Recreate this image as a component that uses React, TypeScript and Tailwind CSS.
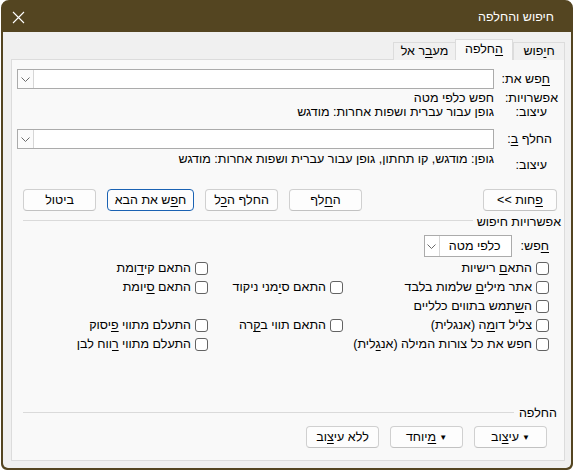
import React from 'react'

const U = ({ children }: { children: React.ReactNode }) => (
  <span className="underline underline-offset-2">{children}</span>
)

function Btn({ children, primary = false, w = 'w-[73px]' }: { children: React.ReactNode; primary?: boolean; w?: string }) {
  return (
    <div
      className={`${w} h-[22px] shrink-0 flex items-center justify-center rounded-[4px] bg-[#fdfdfd] border ${
        primary ? 'border-[#1a62b3]' : 'border-[#d0d0d0] border-b-[#c2c2c2]'
      }`}
    >
      <span className="whitespace-nowrap">{children}</span>
    </div>
  )
}

function Chevron() {
  return (
    <svg width="9" height="5" viewBox="0 0 9 5" fill="none">
      <path d="M0.5 0.5L4.5 4.5L8.5 0.5" stroke="#6a6a6a" strokeWidth="1" />
    </svg>
  )
}

function ComboInput() {
  return (
    <div className="flex-1 h-[20px] flex bg-white border border-[#ababab]">
      <div className="flex-1" />
      <div className="w-[16px] h-full flex items-center justify-center border-r border-[#d6d6d6] bg-[#fbfbfb]">
        <Chevron />
      </div>
    </div>
  )
}

function Check({ children }: { children?: React.ReactNode }) {
  if (!children) return <div />
  return (
    <div className="flex items-center gap-[4px] h-[19px]">
      <div className="w-[13px] h-[13px] shrink-0 rounded-[3px] border border-[#636363] bg-white" />
      <span className="whitespace-nowrap">{children}</span>
    </div>
  )
}

function Divider({ label, textPr, lineClass }: { label: string; textPr: string; lineClass: string }) {
  return (
    <div className={`flex items-center h-[14px] pl-[6px] ${textPr}`}>
      <span className="whitespace-nowrap leading-[14px]">{label}</span>
      <div className={`flex-1 h-px bg-[#dadada] ${lineClass}`} />
    </div>
  )
}

export default function App() {
  return (
    <div
      dir="rtl"
      className="w-[573px] h-[471px] bg-white text-[12.5px] text-black"
      style={{ fontFamily: '"Liberation Sans", "DejaVu Sans", sans-serif' }}
    >
      <div className="w-[572px] h-[470px] flex flex-col rounded-t-[8px] rounded-b-[6px] border-2 border-[#544521] bg-[#544521] overflow-hidden">
        {/* Title bar */}
        <div className="h-[30px] shrink-0 flex items-center justify-between pr-[17px] pl-[9px]">
          <span className="text-white text-[12.5px]">חיפוש והחלפה</span>
          <svg width="13" height="13" viewBox="0 0 13 13" fill="none">
            <path d="M1 1L12 12M12 1L1 12" stroke="#ffffff" strokeWidth="1.1" />
          </svg>
        </div>

        {/* Body */}
        <div className="flex-1 flex flex-col bg-[#f0f0f0] rounded-b-[5px]">
          {/* Tabs */}
          <div className="flex items-end h-[21px] mt-[7px] mr-[6px] relative z-10">
            <div className="w-[52px] h-[18px] flex items-center justify-center border border-b-0 border-[#dcdcdc] bg-[#f0f0f0]">
              <span>
                ח<U>י</U>פוש
              </span>
            </div>
            <div className="w-[58px] h-[21px] flex items-center justify-center border border-b-0 border-[#dcdcdc] bg-[#f9f9f9] pb-[2px]">
              <span>
                <U>ה</U>חלפה
              </span>
            </div>
            <div className="w-[62px] h-[18px] flex items-center justify-center border border-b-0 border-r-0 border-[#dcdcdc] bg-[#f0f0f0]">
              <span>
                מע<U>ב</U>ר אל
              </span>
            </div>
          </div>

          {/* Panel */}
          <div className="h-[402px] -mt-px ml-[8px] mr-[6px] bg-[#f9f9f9] border border-[#dcdcdc] flex flex-col pl-[5px]">
            {/* Find */}
            <div className="flex items-center h-[20px] mt-[9px]">
              <div className="w-[70px] shrink-0 pr-[14px] whitespace-nowrap">
                <U>ח</U>פש את:
              </div>
              <ComboInput />
            </div>
            <div className="flex h-[13px] leading-[13px] mt-[3px]">
              <div className="w-[70px] shrink-0 pr-[6px] whitespace-nowrap">אפשרויות:</div>
              <div className="whitespace-nowrap">חפש כלפי מטה</div>
            </div>
            <div className="flex h-[14px] leading-[14px]">
              <div className="w-[70px] shrink-0 pr-[17px] whitespace-nowrap">עיצוב:</div>
              <div className="whitespace-nowrap">גופן עבור עברית ושפות אחרות: מודגש</div>
            </div>

            {/* Replace */}
            <div className="flex items-center h-[20px] mt-[10px]">
              <div className="w-[70px] shrink-0 pr-[12px] whitespace-nowrap">
                החלף <U>ב</U>:
              </div>
              <ComboInput />
            </div>
            <div className="flex items-start mt-[4px]">
              <div className="w-[70px] shrink-0 pr-[17px] whitespace-nowrap h-[12px] leading-[12px] mt-[6px]">עיצוב:</div>
              <div className="whitespace-nowrap h-[12px] leading-[12px]">
                גופן: מודגש, קו תחתון, גופן עבור עברית ושפות אחרות: מודגש
              </div>
            </div>

            {/* Buttons */}
            <div className="flex items-center mt-[18px] pr-[7px] pl-[6px]">
              <Btn w="w-[74px]">
                <U>פ</U>חות <bdi dir="ltr">&lt;&lt;</bdi>
              </Btn>
              <div className="flex-1" />
              <div className="flex gap-[11px]">
                <Btn>
                  ה<U>ח</U>לף
                </Btn>
                <Btn>
                  החלף ה<U>כ</U>ל
                </Btn>
                <Btn primary w="w-[87px]">
                  ח<U>פ</U>ש את הבא
                </Btn>
                <Btn>ביטול</Btn>
              </div>
            </div>

            {/* Search options */}
            <div className="mt-[4px]">
              <Divider label="אפשרויות חיפוש" textPr="pr-[3px]" lineClass="mr-[4px] mb-[3px]" />
            </div>
            <div className="flex items-center h-[22px] mt-[6px] pr-[15px] gap-[9px]">
              <span className="whitespace-nowrap">
                <U>ח</U>פש:
              </span>
              <div className="w-[88px] h-[22px] flex bg-white border border-[#ababab]">
                <div className="flex-1 flex items-center pr-[10px] whitespace-nowrap">כלפי מטה</div>
                <div className="w-[15px] h-full flex items-center justify-center border-r border-[#d6d6d6]">
                  <Chevron />
                </div>
              </div>
            </div>

            <div className="grid grid-cols-[206px_135px_1fr] mt-[2px] pr-[15px]">
              <Check>
                התא<U>ם</U> רישיות
              </Check>
              <Check />
              <Check>
                התאם קי<U>ד</U>ומת
              </Check>

              <Check>
                אתר מילי<U>ם</U> שלמות בלבד
              </Check>
              <Check>
                התאם ס<U>י</U>מני ניקוד
              </Check>
              <Check>
                התאם <U>ס</U>יומת
              </Check>

              <Check>
                ה<U>ש</U>תמש בתווים כלליים
              </Check>
              <Check />
              <Check />

              <Check>
                צליל דו<U>מ</U>ה (אנגלית)
              </Check>
              <Check>
                התאם תווי ב<U>ק</U>רה
              </Check>
              <Check>
                התעלם מתווי <U>פ</U>יסוק
              </Check>

              <Check>
                חפש את כל צורות המילה (אנ<U>ג</U>לית)
              </Check>
              <Check />
              <Check>
                התעלם מתווי <U>ר</U>ווח לבן
              </Check>
            </div>

            {/* Replace section */}
            <div className="mt-[52px]">
              <Divider label="החלפה" textPr="pr-[7px]" lineClass="mr-[5px] mb-[2px]" />
            </div>
            <div className="flex gap-[11px] mt-[6px] pr-[17px]">
              <Btn>
                <span className="inline-flex items-center gap-[3px]">
                  <span className="text-[8px]">▼</span>
                  <span>
                    עי<U>צ</U>וב
                  </span>
                </span>
              </Btn>
              <Btn>
                <span className="inline-flex items-center gap-[3px]">
                  <span className="text-[8px]">▼</span>
                  <span>
                    <U>מ</U>יוחד
                  </span>
                </span>
              </Btn>
              <Btn>
                ללא עי<U>צ</U>וב
              </Btn>
            </div>
          </div>
        </div>
      </div>
    </div>
  )
}
